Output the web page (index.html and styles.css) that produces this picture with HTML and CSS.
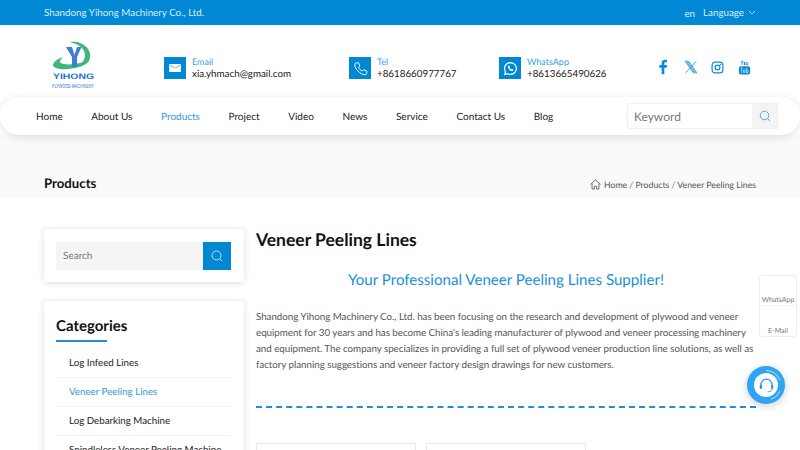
FILE: index.html
```html
<!DOCTYPE html>
<html>
  <head>
    <title>Veneer Peeling Lines</title>
    <link rel="stylesheet" href="styles.css">
  </head>
  <body>
    <div class="top-bar">
      <p class="company">Shandong Yihong Machinery Co., Ltd.</p>
      <div class="lang">
        <span class="lang-code">en</span>
        <span>Language</span>
        <svg class="lang-arrow" viewBox="0 0 8 5"><path d="M1 1l3 3 3-3" fill="none" stroke="#cfe8f7" stroke-width="0.8"/></svg>
      </div>
    </div>

    <div class="header">
      <svg class="logo" viewBox="0 0 44 49">
        <path d="M18 1C30-1 40 8 38 17 36 24 28 26 22 27 30 24 33 19 33 14 33 8 27 3 18 1z" fill="#3cb878"/>
        <path d="M1 24C2 20 6 18 11 16 8 19 7 21 9 22 14 25 28 23 38 19 32 26 18 29 9 28 4 27.500 1 26 1 24z" fill="#3cb878"/>
        <path d="M14 6h6l2.500 8 2.500-8h4.500l-4.500 10v10h-5V16z" fill="#3d7fd6"/>
        <text x="1" y="38" font-size="8" font-weight="bold" fill="#2a72c8" textLength="41" lengthAdjust="spacingAndGlyphs">YIHONG</text>
        <text transform="translate(0 47) scale(0.62 1)" font-size="6" fill="#2a72c8">PLYWOOD MACHINERY</text>
      </svg>
      <div class="contact contact-email">
        <div class="contact-icon">
          <svg viewBox="0 0 24 24" width="14" height="14"><path d="M3 5h18a1 1 0 0 1 1 1v12a1 1 0 0 1-1 1H3a1 1 0 0 1-1-1V6a1 1 0 0 1 1-1zm1 3l8 5 8-5v-1l-8 5-8-5z" fill="#fff"/></svg>
        </div>
        <div>
          <p class="contact-label">Email</p>
          <p class="contact-value">xia.yhmach@gmail.com</p>
        </div>
      </div>
      <div class="contact contact-tel">
        <div class="contact-icon">
          <svg viewBox="0 0 24 24" width="15" height="15"><path d="M6 3l3 0 2 5-2 2c1 3 3 5 6 6l2-2 5 2v3c0 2-1 3-3 3C11 21 3 13 3 6c0-2 1-3 3-3z" fill="none" stroke="#fff" stroke-width="1.500"/></svg>
        </div>
        <div>
          <p class="contact-label">Tel</p>
          <p class="contact-value">+8618660977767</p>
        </div>
      </div>
      <div class="contact contact-whatsapp">
        <div class="contact-icon">
          <svg viewBox="0 0 24 24" width="15" height="15"><path d="M12 2.500a9.500 9.500 0 0 0-8 14.600L3 21.500l4.500-1.100A9.500 9.500 0 1 0 12 2.500z" fill="none" stroke="#fff" stroke-width="2"/><path d="M8.500 7.500c-1 1-1 3 1 5.500s4.500 3.500 6 2.500c1-0.700 1-1.500 0.800-2l-2-1-1 1c-1-0.300-2.500-1.800-3-3l0.800-1-1-2.300z" fill="#fff"/></svg>
        </div>
        <div>
          <p class="contact-label">WhatsApp</p>
          <p class="contact-value">+8613665490626</p>
        </div>
      </div>
      <div class="social">
        <svg viewBox="0 0 24 24" width="16" height="16"><path d="M14 23v-10h3.500l0.500-4h-4V6.500C14 5.300 14.400 4.700 16 4.700h2V1.200C17.500 1.100 16.400 1 15 1c-3 0-5 1.800-5 5v3H6.500v4H10v10z" fill="#0a8ad6"/></svg>
        <svg viewBox="0 0 24 24" width="14" height="14"><path d="M2 2h6l14 20h-6zM21 2l-8 9M3 22l8-9M5 3.500l11.700 17h2.300L7.300 3.500z" fill="none" stroke="#0a8ad6" stroke-width="1.300"/></svg>
        <svg viewBox="0 0 24 24" width="13" height="13"><rect x="2" y="2" width="20" height="20" rx="5.500" fill="none" stroke="#0a8ad6" stroke-width="2.200"/><circle cx="12" cy="12" r="4.500" fill="none" stroke="#0a8ad6" stroke-width="2.200"/><circle cx="17.500" cy="6.500" r="1.400" fill="#0a8ad6"/></svg>
        <svg viewBox="0 0 24 24" width="15" height="15"><path d="M6 1l1.500 4V8h1.200V5L10.500 1H9.300L8.100 3.500 7 1zM11 3h2.200v5H11zM14.500 3h1v4h1.500V3h1v5h-3.500z" fill="#0a8ad6"/><rect x="3" y="10" width="18" height="13" rx="3" fill="#0a8ad6"/><path d="M6 12.500h3M7.500 12.500v8M10.500 15v5h2v-5M15 12.500v8M15 16h2.500v4.500H15" fill="none" stroke="#fff" stroke-width="0.900"/></svg>
      </div>
    </div>

    <div class="nav">
      <a class="nav-link">Home</a>
      <a class="nav-link">About Us</a>
      <a class="nav-link nav-active">Products</a>
      <a class="nav-link">Project</a>
      <a class="nav-link">Video</a>
      <a class="nav-link">News</a>
      <a class="nav-link">Service</a>
      <a class="nav-link">Contact Us</a>
      <a class="nav-link">Blog</a>
      <div class="nav-search">
        <span class="nav-search-text">Keyword</span>
        <div class="nav-search-btn">
          <svg viewBox="0 0 24 24" width="12" height="12"><circle cx="11" cy="11" r="8.500" fill="none" stroke="#3f9fdc" stroke-width="1.800"/><path d="M17 17l5 5" stroke="#3f9fdc" stroke-width="1.800"/></svg>
        </div>
      </div>
    </div>

    <div class="banner">
      <p class="banner-title">Products</p>
      <p class="crumbs">
        <svg viewBox="0 0 24 24" width="11" height="11"><path d="M1 12L12 2l11 10M4.500 10v12h5v-6h5v6h5V10" fill="none" stroke="#555" stroke-width="1.800"/></svg>
        Home / Products / Veneer Peeling Lines
      </p>
    </div>

    <div class="main">
      <div class="sidebar">
        <div class="card">
          <div class="side-search">
            <span class="side-search-text">Search</span>
            <div class="side-search-btn">
              <svg viewBox="0 0 24 24" width="12" height="12"><circle cx="11" cy="11" r="9" fill="none" stroke="#fff" stroke-width="1.500"/><path d="M17.500 17.500l5 5" stroke="#fff" stroke-width="1.500"/></svg>
            </div>
          </div>
        </div>
        <div class="card categories">
          <h3 class="cat-title">Categories</h3>
          <a class="cat-item">Log Infeed Lines</a>
          <a class="cat-item cat-active">Veneer Peeling Lines</a>
          <a class="cat-item">Log Debarking Machine</a>
          <a class="cat-item">Spindleless Veneer Peeling Machine</a>
        </div>
      </div>
      <div class="content">
        <h1 class="title">Veneer Peeling Lines</h1>
        <h2 class="subtitle">Your Professional Veneer Peeling Lines Supplier!</h2>
        <p class="intro">Shandong Yihong Machinery Co., Ltd. has been focusing on the research and development of plywood and veneer equipment for 30 years and has become China's leading manufacturer of plywood and veneer processing machinery and equipment. The company specializes in providing a full set of plywood veneer production line solutions, as well as factory planning suggestions and veneer factory design drawings for new customers.</p>
        <div class="dash"></div>
        <div class="products">
          <div class="product"></div>
          <div class="product"></div>
        </div>
      </div>
    </div>

    <div class="float-box">
      <div class="float-item float-first">WhatsApp</div>
      <div class="float-item">E-Mail</div>
    </div>
    <div class="chat">
      <svg class="chat-ring" viewBox="0 0 38 38"><path d="M19 4.500a14.500 14.500 0 0 1 14 10M33 25a14.500 14.500 0 0 1-9 8" fill="none" stroke="#fff" stroke-width="0.700"/></svg>
      <div class="chat-inner">
        <svg viewBox="0 0 24 24" width="17" height="17"><path d="M4 14v-3a8 8 0 0 1 16 0v3" fill="none" stroke="#2b8fe0" stroke-width="1.600"/><rect x="2.500" y="11" width="3" height="6" rx="1.500" fill="#2b8fe0"/><rect x="18.500" y="11" width="3" height="6" rx="1.500" fill="#2b8fe0"/><path d="M20 17c0 2.500-3 4-6.500 4" fill="none" stroke="#2b8fe0" stroke-width="1.200"/></svg>
      </div>
    </div>
  </body>
</html>
```

FILE: styles.css
```css
html, body {
    height: 450px;
    overflow: hidden;
}
body {
    margin: 0;
    font-family: Lato, "Open Sans", sans-serif;
    color: #222;
    background-color: white;
    text-rendering: geometricPrecision;
}
p, h1, h2, h3 {
    margin: 0;
}
.top-bar {
    height: 25px;
    background-color: #0088d4;
    color: #d9eefa;
    font-size: 9.800px;
    display: flex;
    align-items: center;
    justify-content: space-between;
    padding: 0 44px;
}
.lang {
    display: flex;
    align-items: center;
    gap: 4px;
}
.lang-code {
    margin-top: 3px;
    margin-right: 4px;
}
.lang-arrow {
    width: 8px;
    height: 5px;
}
.header {
    height: 72px;
    padding-left: 52px;
    display: flex;
    align-items: center;
}
.logo {
    width: 44px;
    height: 49px;
    margin-top: 9px;
    overflow: visible;
    font-family: "Liberation Sans", sans-serif;
}
.contact {
    display: flex;
    align-items: center;
    gap: 6px;
    margin-top: 14px;
}
.contact-email {
    margin-left: 68px;
    width: 185px;
}
.contact-tel {
    width: 150px;
}
.contact-whatsapp {
    width: 156px;
}
.contact-icon {
    width: 22px;
    height: 22px;
    background-color: #0088d4;
    display: flex;
    align-items: center;
    justify-content: center;
}
.contact-label {
    font-size: 9px;
    line-height: 13px;
    color: #3c9fdf;
}
.contact-value {
    font-size: 9.800px;
    line-height: 13px;
    color: #222;
}
.social {
    display: flex;
    align-items: center;
    gap: 13px;
    margin-top: 12px;
}
.nav {
    height: 38px;
    border-radius: 20px;
    background-color: white;
    box-shadow: 0 2px 8px rgba(0, 0, 0, 0.12);
    display: flex;
    align-items: center;
    padding: 0 22px 0 36px;
    position: relative;
    gap: 28.600px;
}
.nav-link {
    font-size: 10px;
    color: #222;
    padding-top: 1px;
}
.nav-active {
    color: #2f98dc;
}
.nav-search {
    margin-left: auto;
    width: 151px;
    height: 26px;
    border: 1px solid #f0f0f0;
    display: flex;
    align-items: center;
    justify-content: space-between;
    box-sizing: border-box;
}
.nav-search-text {
    font-size: 12px;
    color: #777;
    padding-left: 6px;
}
.nav-search-btn {
    width: 25px;
    height: 24px;
    background-color: #f4f4f4;
    display: flex;
    align-items: center;
    justify-content: center;
}
.banner {
    height: 63px;
    background-color: #f9f9f9;
    padding: 0 44px;
    display: flex;
    align-items: flex-end;
    justify-content: space-between;
}
.banner-title {
    font-size: 13.200px;
    font-weight: bold;
    color: #111;
    margin-bottom: 7px;
}
.crumbs {
    font-size: 8.700px;
    color: #555;
    margin-bottom: 8px;
    display: flex;
    align-items: center;
    gap: 3px;
}
.main {
    display: flex;
    gap: 12px;
    padding: 31px 44px 0;
}
.sidebar {
    width: 200px;
    flex-shrink: 0;
}
.card {
    padding: 13px 13px 12px 12px;
    border-radius: 3px;
    background-color: white;
    box-shadow: 0 1px 6px rgba(0, 0, 0, 0.15);
    margin-bottom: 19px;
}
.side-search {
    height: 28px;
    background-color: #f5f5f5;
    display: flex;
    align-items: center;
    justify-content: space-between;
}
.side-search-text {
    font-size: 10px;
    color: #777;
    padding-left: 7px;
}
.side-search-btn {
    width: 28px;
    height: 28px;
    background-color: #0088d4;
    display: flex;
    align-items: center;
    justify-content: center;
}
.categories {
    padding-top: 15px;
}
.cat-title {
    font-size: 15px;
    line-height: 20px;
    color: #111;
    margin-bottom: 2px;
    padding-bottom: 5px;
}
.cat-title::after {
    content: "";
    display: block;
    width: 51px;
    height: 2px;
    background-color: #1c8fd8;
    margin-top: 4px;
}
.cat-item {
    display: block;
    font-size: 9.750px;
    line-height: 28px;
    padding-left: 13px;
    border-bottom: 1px solid #f1f1f1;
    color: #222;
    white-space: nowrap;
}
.cat-active {
    color: #2f98dc;
}
.content {
    width: 500px;
}
.title {
    font-size: 17.500px;
    line-height: 22px;
    color: #111;
}
.subtitle {
    font-size: 15.100px;
    font-weight: normal;
    line-height: 20px;
    color: #1c8fd8;
    text-align: center;
    margin-top: 19px;
}
.intro {
    font-size: 9.800px;
    letter-spacing: -0.040px;
    line-height: 16px;
    color: #555;
    margin-top: 19px;
}
.dash {
    border-top: 2px dashed #1c8fd8;
    margin-top: 33px;
}
.products {
    display: flex;
    gap: 10px;
    margin-top: 35px;
}
.product {
    width: 158px;
    height: 100px;
    border: 1px solid #e8e8e8;
}
.float-box {
    position: absolute;
    left: 759px;
    top: 275px;
    width: 38px;
    height: 62px;
    border: 1px solid #eee;
    border-radius: 3px;
    background-color: white;
    box-sizing: border-box;
}
.float-item {
    height: 30px;
    font-size: 7px;
    color: #777;
    text-align: center;
    display: flex;
    align-items: flex-end;
    justify-content: center;
    padding-bottom: 1px;
    box-sizing: border-box;
}
.float-first {
    border-bottom: 1px solid #f2f2f2;
    padding-bottom: 1px;
}
.chat {
    position: absolute;
    left: 747px;
    top: 366px;
    width: 38px;
    height: 38px;
    border-radius: 50%;
    background-color: #2fa4f0;
    box-shadow: 0 2px 8px rgba(0, 0, 0, 0.2);
    display: flex;
    align-items: center;
    justify-content: center;
}
.chat-ring {
    position: absolute;
    left: 0;
    top: 0;
    width: 38px;
    height: 38px;
}
.chat-inner {
    width: 24px;
    height: 24px;
    border-radius: 50%;
    background-color: white;
    display: flex;
    align-items: center;
    justify-content: center;
}
```
